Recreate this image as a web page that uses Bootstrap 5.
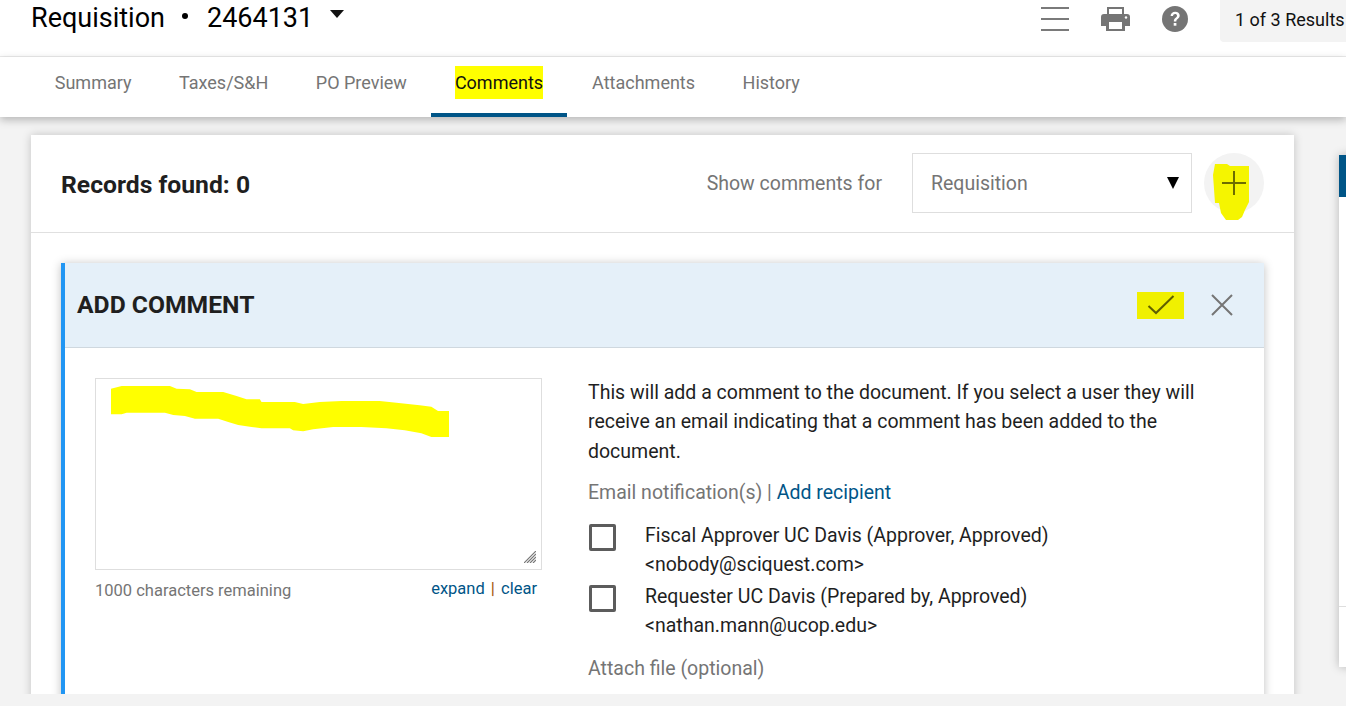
<!DOCTYPE html>
<html lang="en">
<head>
  <meta charset="UTF-8" />
  <meta name="viewport" content="width=device-width, initial-scale=1" />
  <title>Requisition 2464131 - Comments</title>
  <link rel="stylesheet" href="https://cdn.jsdelivr.net/npm/bootstrap@5.3.3/dist/css/bootstrap.min.css">
  <style>
    body {
      font-family: Roboto, "Liberation Sans", sans-serif;
      background: #f3f3f3;
      color: #1f1f1f;
      height: 706px;
      overflow: hidden;
    }
    .page-clip { height: 694px; overflow: hidden; }

    .top-bar { height: 57px; background: #fff; border-bottom: 1px solid #ececec; padding-left: 31px; }
    .doc-title { font-size: 27px; line-height: 36px; color: #000; }
    .doc-dot { width: 6px; height: 6px; border-radius: 50%; background: #000; margin: 0 19px 4px 17px; }
    .doc-caret { width: 0; height: 0; border: 7.5px solid transparent; border-top: 8px solid #111; border-bottom: 0; margin: 0 0 9px 17px; }
    .top-tools { gap: 32px; }
    .tool-icon { margin-bottom: 4px; flex-shrink: 0; }
    .results-box { width: 126px; height: 42px; background: #f3f3f3; border-bottom-left-radius: 4px; padding: 0 0 4px 15px; font-size: 18px; color: #111; white-space: nowrap; }

    .tab-bar { height: 60px; background: #fff; padding-left: 31px; box-shadow: 0 3px 8px rgba(0,0,0,.25); position: relative; z-index: 2; }
    .tab-link { display: flex; align-items: center; height: 60px; padding: 0 23.75px 10px; font-size: 18px; color: #757575; text-decoration: none; }
    .tab-active { color: #111; border-bottom: 4px solid #005587; padding: 0 24.25px 6px; margin-right: 1px; }
    .tab-mark { background: #ffff00; padding: 3px 0; }

    .work-area { padding: 18px 0 0 31px; gap: 45px; }
    .main-panel { width: 1263px; flex-shrink: 0; background: #fff; height: 600px; box-shadow: 0 0 9px rgba(0,0,0,.2); }
    .panel-head { height: 98px; border-bottom: 1px solid #e0e0e0; padding: 0 30px; }
    .records-title { font-size: 24.7px; font-weight: 700; margin: 0; padding-top: 2px; color: #1f1f1f; }
    .head-tools { margin-bottom: 2px; }
    .show-label { font-size: 19.5px; color: #757575; margin-right: 30px; padding-top: 2px; }
    .doc-picker { width: 280px; height: 60px; border: 1px solid #dedede; padding: 2px 12px 0 18px; font-size: 19.5px; color: #757575; }
    .picker-caret { width: 0; height: 0; border: 6px solid transparent; border-top: 12px solid #000; border-bottom: 0; margin-bottom: 2px; }
    .add-round { width: 60px; height: 60px; border-radius: 50%; background: #f3f3f3; margin: 0 0 0 12px; position: relative; padding: 0; border: 0; }
    .add-round svg.plus-icon { position: absolute; left: 18px; top: 18px; }
    .add-round svg.plus-mark { position: absolute; left: 8px; top: 10px; }

    .panel-body { padding: 30px 30px 0; }
    .comment-box { border-left: 4px solid #2196f3; box-shadow: 0 1px 9px rgba(0,0,0,.25); height: 500px; }
    .comment-head { height: 85px; background: #e5f0f9; border-bottom: 1px solid #cfd8df; padding: 0 31px 0 12px; }
    .comment-title { font-size: 24.7px; font-weight: 700; margin: 0; color: #1f1f1f; }
    .check-mark { background: #f0f000; width: 47px; height: 27px; margin-right: 27px; }
    .comment-body { padding: 30px 30px 0 30px; gap: 46px; }
    .note-col { width: 447px; flex-shrink: 0; }
    .note-area { height: 192px; border: 1px solid #dedede; position: relative; }
    .note-scribble { position: absolute; left: 15px; top: 7px; }
    .note-grip { position: absolute; right: 5px; bottom: 6px; }
    .note-foot { font-size: 16.5px; color: #757575; padding: 7px 5px 0 0; }
    .note-remaining { padding-top: 2px; }
    .note-foot a { color: #005587; text-decoration: none; }
    .note-sep { color: #a85a10; font-weight: 500; margin: 0 2px; }
    .info-col { width: 620px; font-size: 19.5px; line-height: 29.5px; margin-top: -.5px; }
    .info-text { margin: 0 0 12px; color: #1f1f1f; }
    .field-label { color: #757575; }
    .info-col a { color: #005587; text-decoration: none; }
    .recipient-row { display: flex; }
    .recipient-list { margin-top: 13px; }
    .tick-box { width: 27px; height: 27px; border: 3px solid #5c5c5c; border-radius: 2px; margin: 3px 29px 0 1px; flex-shrink: 0; }
    .recipient-row + .recipient-row { margin-top: 2px; }
    .attach-label { margin-top: 13px; }

    .side-panel { width: 60px; flex-shrink: 0; height: 512px; margin-top: 20px; background: #fff; box-shadow: 0 0 9px rgba(0,0,0,.25); }
    .side-top { height: 42px; background: #005587; }
    .side-rule { margin-top: 409px; border-top: 1px solid #dedede; }
  </style>
</head>
<body>
  <div class="page-clip">
    <div class="top-bar d-flex justify-content-between align-items-start">
      <div class="doc-title d-flex align-items-center">
        Requisition<span class="doc-dot"></span>2464131<span class="doc-caret"></span>
      </div>
      <div class="top-tools d-flex align-items-center">
        <svg class="tool-icon" width="28" height="24" viewBox="0 0 28 24" aria-label="menu"><path d="M0 1h28M0 12h28M0 23h28" stroke="#7a7a7a" stroke-width="2" fill="none"/></svg>
        <svg class="tool-icon" width="29" height="24" viewBox="0 0 29 24" aria-label="print"><path fill="#757575" d="M6 0h17v8H6zM3 7h23a3 3 0 0 1 3 3v9h-5v5H5v-5H0V10a3 3 0 0 1 3-3z"/><path fill="#fff" d="M8 2h13v5H8zM8 15h13v7H8z"/><circle cx="25" cy="10.500" r="1.200" fill="#fff"/></svg>
        <svg class="tool-icon" width="26" height="26" viewBox="0 0 26 26" aria-label="help"><circle cx="13" cy="13" r="13" fill="#757575"/><path d="M8.600 10c0-2.700 2-4.300 4.600-4.300s4.500 1.500 4.500 3.800c0 3.200-3.400 3.200-3.400 6h-2.500c0-3.800 3.200-3.900 3.200-5.800 0-1-.8-1.700-1.900-1.700s-2 .8-2.100 2z" fill="#fff"/><rect x="11.700" y="17" width="2.700" height="2.700" fill="#fff"/></svg>
        <div class="results-box d-flex align-items-center">1 of 3 Results</div>
      </div>
    </div>

    <nav class="tab-bar d-flex">
      <a class="tab-link" href="#">Summary</a>
      <a class="tab-link" href="#">Taxes/S&amp;H</a>
      <a class="tab-link" href="#">PO Preview</a>
      <a class="tab-link tab-active" href="#"><span class="tab-mark">Comments</span></a>
      <a class="tab-link" href="#">Attachments</a>
      <a class="tab-link" href="#">History</a>
    </nav>

    <div class="work-area d-flex">
      <section class="main-panel">
        <div class="panel-head d-flex align-items-center justify-content-between">
          <h2 class="records-title">Records found: 0</h2>
          <div class="head-tools d-flex align-items-center">
            <span class="show-label">Show comments for</span>
            <div class="doc-picker d-flex align-items-center justify-content-between">
              <span>Requisition</span><span class="picker-caret"></span>
            </div>
            <button class="add-round" type="button" aria-label="Add comment">
              <svg class="plus-mark" width="38" height="58" viewBox="0 0 38 58"><path fill="#f5f500" d="M1 12 3 1h12l3 2h19v36l-4 8-3 7-4 3H14l-5-7-2-10H3z"/></svg>
              <svg class="plus-icon" width="24" height="24" viewBox="0 0 24 24"><path d="M0 12h24M12 0v24" stroke="#6c6c00" stroke-width="2" fill="none"/></svg>
            </button>
          </div>
        </div>

        <div class="panel-body">
          <div class="comment-box">
            <div class="comment-head d-flex align-items-center justify-content-between">
              <h3 class="comment-title">ADD COMMENT</h3>
              <div class="d-flex align-items-center">
                <div class="check-mark d-flex align-items-center justify-content-center">
                  <svg width="28" height="20" viewBox="0 0 28 20"><path d="M1.500 11 9 18 26.500 1" stroke="#5f5f00" stroke-width="2" fill="none"/></svg>
                </div>
                <svg width="22" height="22" viewBox="0 0 22 22" aria-label="close"><path d="M1 1l20 20M21 1 1 21" stroke="#757575" stroke-width="2" fill="none"/></svg>
              </div>
            </div>
            <div class="comment-body d-flex">
              <div class="note-col">
                <div class="note-area">
                  <svg class="note-scribble" width="338" height="51" viewBox="213 50 1015 153"><path fill="#ffff00" d="M213 58 245 50H390L410 58 450 60 470 68H550L590 80 620 90H660L665 98H765L790 104 840 98 905 95H1020L1070 100 1140 108 1175 112 1195 125H1228V203H1175L1145 192 1095 183 1040 177 965 173H880L820 180 790 186 760 183 750 177H665L635 173 595 167 565 158 535 148H465L435 140 400 137 375 130H260L245 135H213z"/></svg>
                  <svg class="note-grip" width="12" height="12" viewBox="0 0 12 12"><path d="M0 12 12 0M3 12l9-9M6 12l6-6M9 12l3-3" stroke="#777" stroke-width="1.200"/></svg>
                </div>
                <div class="note-foot d-flex justify-content-between">
                  <span class="note-remaining">1000 characters remaining</span>
                  <span><a href="#">expand</a> <span class="note-sep">|</span> <a href="#">clear</a></span>
                </div>
              </div>
              <div class="info-col">
                <p class="info-text">This will add a comment to the document. If you select a user they will receive an email indicating that a comment has been added to the document.</p>
                <div><span class="field-label">Email notification(s) | </span><a href="#">Add recipient</a></div>
                <div class="recipient-list">
                  <div class="recipient-row">
                    <span class="tick-box"></span>
                    <div>Fiscal Approver UC Davis (Approver, Approved)<br>&lt;nobody@sciquest.com&gt;</div>
                  </div>
                  <div class="recipient-row">
                    <span class="tick-box"></span>
                    <div>Requester UC Davis (Prepared by, Approved)<br>&lt;nathan.mann@ucop.edu&gt;</div>
                  </div>
                </div>
                <div class="field-label attach-label">Attach file (optional)</div>
              </div>
            </div>
          </div>
        </div>
      </section>

      <aside class="side-panel">
        <div class="side-top"></div>
        <div class="side-rule"></div>
      </aside>
    </div>
  </div>
  <script src="https://cdn.jsdelivr.net/npm/bootstrap@5.3.3/dist/js/bootstrap.bundle.min.js"></script>
</body>
</html>
